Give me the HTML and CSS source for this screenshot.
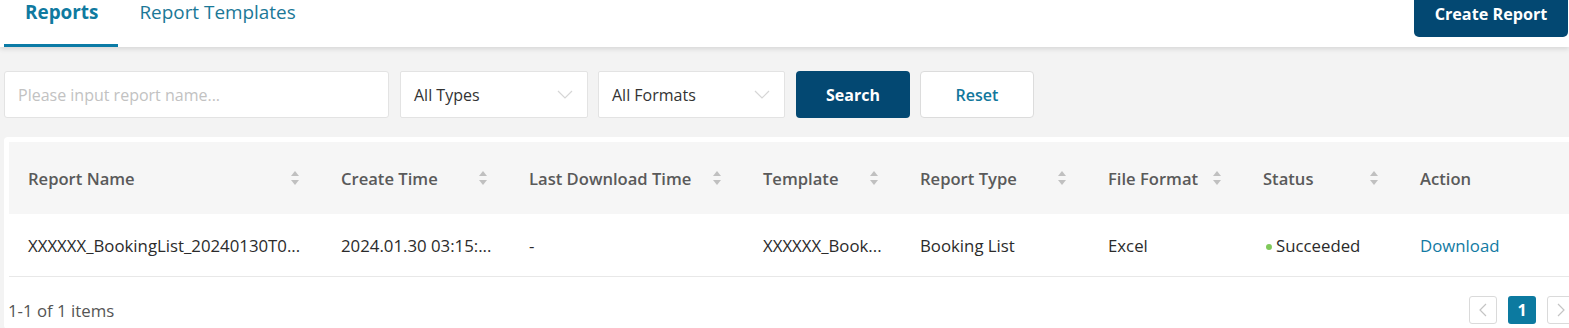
FILE: index.html
```html
<!DOCTYPE html>
<html lang="en">
<head>
  <meta charset="UTF-8">
  <title>Reports</title>
  <link rel="stylesheet" href="styles.css">
</head>
<body>

<div class="topbar">
  <div class="tabs">
    <div class="tab ativo">Reports</div>
    <div class="tab">Report Templates</div>
  </div>
  <button class="btn-create">Create Report</button>
</div>

<div class="conteudo">
  <div class="filtros">
    <input class="campo-nome" type="text" placeholder="Please input report name...">
    <div class="seletor tipos">
      <span>All Types</span>
      <svg width="16" height="9" viewBox="0 0 16 9"><polyline points="1,1 8,8 15,1" fill="none" stroke="#d6d6d6" stroke-width="1.2"/></svg>
    </div>
    <div class="seletor formatos">
      <span>All Formats</span>
      <svg width="16" height="9" viewBox="0 0 16 9"><polyline points="1,1 8,8 15,1" fill="none" stroke="#d6d6d6" stroke-width="1.2"/></svg>
    </div>
    <button class="btn-search">Search</button>
    <button class="btn-reset">Reset</button>
  </div>

  <div class="cartao">
    <table class="tabela">
      <colgroup>
        <col style="width:313px">
        <col style="width:188px">
        <col style="width:234px">
        <col style="width:157px">
        <col style="width:188px">
        <col style="width:155px">
        <col style="width:157px">
        <col>
      </colgroup>
      <thead>
        <tr>
          <th><div class="cab">Report Name <span class="ordem"></span></div></th>
          <th><div class="cab">Create Time <span class="ordem"></span></div></th>
          <th><div class="cab">Last Download Time <span class="ordem"></span></div></th>
          <th><div class="cab">Template <span class="ordem"></span></div></th>
          <th><div class="cab">Report Type <span class="ordem"></span></div></th>
          <th><div class="cab">File Format <span class="ordem"></span></div></th>
          <th><div class="cab">Status <span class="ordem"></span></div></th>
          <th><div class="cab">Action</div></th>
        </tr>
      </thead>
      <tbody>
        <tr>
          <td>XXXXXX_BookingList_20240130T0...</td>
          <td>2024.01.30 03:15:...</td>
          <td>-</td>
          <td>XXXXXX_Book...</td>
          <td>Booking List</td>
          <td>Excel</td>
          <td><span class="ponto"></span>Succeeded</td>
          <td><a class="link" href="#">Download</a></td>
        </tr>
      </tbody>
    </table>

    <div class="rodape">
      <span class="total">1-1 of 1 items</span>
      <div class="paginas">
        <button class="pag"><svg width="8" height="14" viewBox="0 0 8 14"><polyline points="7,1 1,7 7,13" fill="none" stroke="#c4c4c4" stroke-width="1.2"/></svg></button>
        <button class="pag atual">1</button>
        <button class="pag"><svg width="8" height="14" viewBox="0 0 8 14"><polyline points="1,1 7,7 1,13" fill="none" stroke="#c4c4c4" stroke-width="1.2"/></svg></button>
      </div>
    </div>
  </div>
</div>

</body>
</html>
```

FILE: styles.css
```css
html, body {
  overflow: hidden;
}

body {
  margin: 0;
  font-family: "Open Sans", Arial, sans-serif;
  background: #f3f3f3;
  color: #333;
}

.topbar {
  display: flex;
  justify-content: space-between;
  align-items: flex-start;
  height: 47px;
  padding: 0 1px 0 4px;
  background: #fff;
  box-shadow: 0 2px 5px rgba(0, 0, 0, 0.12);
  position: relative;
}

.tabs {
  display: flex;
  height: 47px;
}

.tab {
  padding: 0 20px 0 21px;
  font-size: 18.9px;
  line-height: 24px;
  color: #1b7897;
  box-sizing: border-box;
  height: 47px;
}

.tab.ativo {
  font-weight: 700;
  color: #0f7aa0;
  border-bottom: 3px solid #0b7ba6;
}

button {
  font-family: "Open Sans", Arial, sans-serif;
  cursor: pointer;
}

.btn-create {
  width: 154px;
  height: 37px;
  border: none;
  border-radius: 0 0 5px 5px;
  background: #034872;
  color: #fff;
  font-size: 16.2px;
  font-weight: 700;
  padding: 0 0 10px;
}

.conteudo {
  width: 1571px;
  padding: 24px 0 0 4px;
}

.filtros {
  display: flex;
  height: 47px;
}

.campo-nome {
  width: 385px;
  height: 47px;
  box-sizing: border-box;
  border: 1px solid #e3e3e3;
  border-radius: 3px;
  padding: 0 13px;
  font-family: "Open Sans", Arial, sans-serif;
  font-size: 16px;
  outline: none;
}

.campo-nome::placeholder {
  color: #c2c2c2;
}

.seletor {
  display: flex;
  align-items: center;
  justify-content: space-between;
  height: 47px;
  box-sizing: border-box;
  border: 1px solid #e3e3e3;
  border-radius: 2px;
  background: #fff;
  padding: 0 14px 0 13px;
  font-size: 16px;
  color: #333;
}

.tipos {
  width: 188px;
  margin-left: 11px;
}

.formatos {
  width: 187px;
  margin-left: 10px;
}

.btn-search,
.btn-reset {
  width: 114px;
  height: 47px;
  font-size: 16px;
  border-radius: 4px;
}

.btn-search {
  margin-left: 11px;
  border: none;
  background: #034872;
  color: #fff;
  font-weight: 700;
}

.btn-reset {
  margin-left: 10px;
  border: 1px solid #dcdcdc;
  background: #fff;
  color: #12779c;
  font-weight: 600;
}

.cartao {
  margin-top: 19px;
  background: #fff;
  border-radius: 4px;
  padding: 5px 0 5px 5px;
}

.tabela {
  width: 100%;
  border-collapse: collapse;
  table-layout: fixed;
  font-size: 16.8px;
}

.tabela th {
  height: 72px;
  background: #f6f6f6;
  text-align: left;
  font-weight: 600;
  font-size: 16.6px;
  color: #5a5a5a;
  padding: 0 22px 0 19px;
}

.cab {
  display: flex;
  align-items: center;
  justify-content: space-between;
  white-space: nowrap;
}

.ordem {
  width: 9px;
  height: 14px;
  flex: none;
  position: relative;
}

.ordem::before,
.ordem::after {
  content: "";
  position: absolute;
  left: 0;
  border-left: 4.5px solid transparent;
  border-right: 4.5px solid transparent;
}

.ordem::before {
  top: 0;
  border-bottom: 5px solid #c0c0c0;
}

.ordem::after {
  bottom: 0;
  border-top: 5px solid #c0c0c0;
}

.tabela td {
  height: 61px;
  padding: 1px 10px 0 19px;
  border-bottom: 1px solid #e8e8e8;
  color: #2b2b2b;
  white-space: nowrap;
  overflow: hidden;
}

.ponto {
  display: inline-block;
  width: 6px;
  height: 6px;
  border-radius: 50%;
  background: #80c95a;
  margin: 0 4px 2px 3px;
  vertical-align: middle;
}

.link {
  color: #127aa3;
  text-decoration: none;
}

.rodape {
  display: flex;
  justify-content: space-between;
  align-items: center;
  padding-top: 19px;
}

.total {
  font-size: 16.8px;
  color: #555;
  margin-left: -1px;
}

.paginas {
  display: flex;
  gap: 11px;
}

.pag {
  width: 28px;
  height: 28px;
  box-sizing: border-box;
  border: 1px solid #dadada;
  border-radius: 3px;
  background: #fff;
  display: flex;
  align-items: center;
  justify-content: center;
  padding: 0;
}

.pag.atual {
  border: none;
  background: #0c7aa0;
  color: #fff;
  font-size: 16px;
  font-weight: 700;
}
```
